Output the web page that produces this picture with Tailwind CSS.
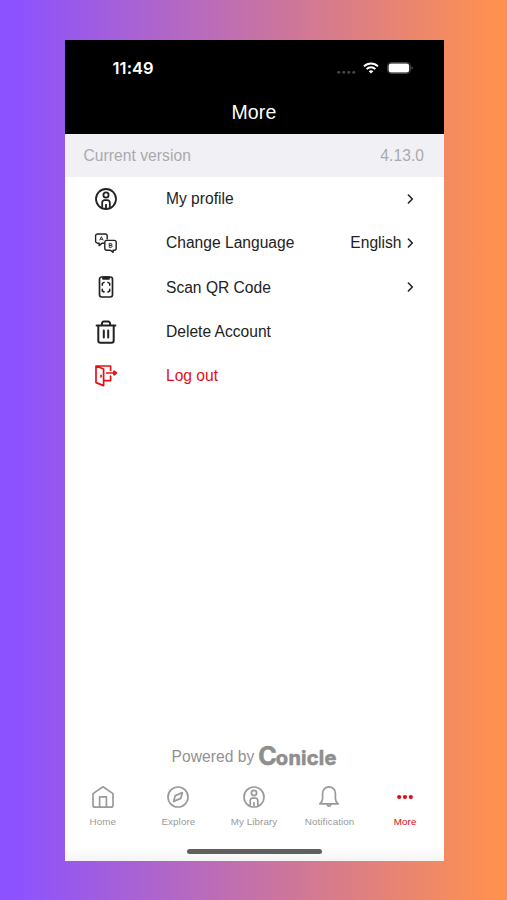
<!DOCTYPE html>
<html lang="en">
<head>
  <meta charset="UTF-8">
  <title>More</title>
  <script src="https://cdn.jsdelivr.net/npm/@tailwindcss/browser@4"></script>
</head>

<body>
  <div class="w-full h-screen pt-[39.5px] pl-[64.5px] bg-linear-to-r/srgb from-[#8c52ff] from-3% to-[#ff914f] to-98% font-['Liberation_Sans',sans-serif]">
    <div class="w-[379px] h-[821.5px] flex flex-col bg-white">
      <!-- header -->
      <header class="h-[94.5px] bg-black text-white">
        <div class="h-14 pl-12 pr-[31px] flex items-center justify-between">
          <span class="font-['Inter',sans-serif] font-semibold text-[16.5px] leading-4 tracking-[0.1px]">11:49</span>
          <div class="flex items-center">
            <svg class="w-5 h-4 mr-[6px]" viewBox="0 0 20 16" fill="#444">
              <circle cx="1.8" cy="12.2" r="1.5"/>
              <circle cx="6.8" cy="12.2" r="1.5"/>
              <circle cx="11.8" cy="12.2" r="1.5"/>
              <circle cx="16.8" cy="12.2" r="1.5"/>
            </svg>
            <svg class="w-4 h-3 mr-2" viewBox="0 0 16 12" fill="none" stroke="white" stroke-width="2">
              <path d="M1 4.4a10 10 0 0 1 14 0M3.6 7.1a6.3 6.3 0 0 1 8.8 0"/>
              <path d="M8 11.6 5.7 9.3a3.4 3.4 0 0 1 4.6 0z" fill="white" stroke="none"/>
            </svg>
            <svg class="w-[26px] h-3" viewBox="0 0 26 12">
              <rect x=".5" y=".5" width="23" height="11" rx="3.6" fill="none" stroke="#444"/>
              <rect x="1.6" y="1.6" width="20.6" height="8.8" rx="2.6" fill="white"/>
              <path d="M24.6 4.2v3.6a2 2 0 0 0 0-3.6z" fill="#666"/>
            </svg>
          </div>
        </div>
        <h1 class="text-center text-[19.5px] leading-8 tracking-[0.2px]">More</h1>
      </header>

      <div class="h-[42.5px] pt-px pl-[19px] pr-[19.5px] flex items-center justify-between bg-[#f1f0f5] text-[#aaaaac] text-[15.6px] tracking-[0.05px]">
        <span>Current version</span>
        <span>4.13.0</span>
      </div>

      <!-- menu -->
      <ul class="text-[15.6px] text-[#222]">
        <li class="h-[44.3px] pl-[29.5px] pr-[28px] flex items-center">
          <svg class="w-6 h-6 mr-12" viewBox="0 0 24 24" fill="none" stroke="currentColor" stroke-width="1.8">
            <circle cx="12" cy="12" r="10"/>
            <circle cx="12" cy="8" r="2.6"/>
            <path d="M8.2 20.8v-5.3a2.3 2.3 0 0 1 2.3-2.3h3a2.3 2.3 0 0 1 2.3 2.3v5.3M12 17v4"/>
          </svg>
          <span class="grow">My profile</span>
          <svg class="w-3 h-3" viewBox="0 0 12 12" fill="none" stroke="currentColor" stroke-width="1.6" stroke-linecap="round" stroke-linejoin="round"><path d="m4.4 2 3.9 4-3.9 4"/></svg>
        </li>
        <li class="h-[44.3px] pl-[29.5px] pr-[28px] flex items-center">
          <svg class="w-6 h-6 mr-12" viewBox="0 0 24 24" fill="none" stroke="currentColor" stroke-width="1.4" stroke-linejoin="round">
            <path d="M10.5 12.2H8L5.2 14.6v-2.4H3.6a2 2 0 0 1-2-2V5a2 2 0 0 1 2-2h7.6a2 2 0 0 1 2 2v3.5"/>
            <path d="M12.8 9.4h7.4a2 2 0 0 1 2 2v5.8a2 2 0 0 1-2 2h-1.1v2.2l-2.6-2.2h-3.7a2 2 0 0 1-2-2v-5.8a2 2 0 0 1 2-2z"/>
            <path d="m5.6 9.4 1.8-3.7 1.8 3.7M6.2 8.3h2.4M15.2 12.4h1.7a.9.9 0 0 1 0 1.9h-1.7zM15.2 14.3h2a1 1 0 0 1 0 2h-2z" stroke-width=".9"/>
          </svg>
          <span class="grow">Change Language</span>
          <span class="mr-[2px]">English</span>
          <svg class="w-3 h-3" viewBox="0 0 12 12" fill="none" stroke="currentColor" stroke-width="1.6" stroke-linecap="round" stroke-linejoin="round"><path d="m4.4 2 3.9 4-3.9 4"/></svg>
        </li>
        <li class="h-[44.3px] pl-[29.5px] pr-[28px] flex items-center">
          <svg class="w-6 h-6 mr-12" viewBox="0 0 24 24" fill="none" stroke="currentColor" stroke-width="1.7" stroke-linecap="round" stroke-linejoin="round">
            <rect x="5.5" y="2" width="13" height="20" rx="2.2"/>
            <path d="M9 2.2h6v1.6H9z"/>
            <path d="M8.3 10.2V8.4l1.8-1M15.7 10.2V8.4l-1.8-1M8.3 14.2V16l1.8 1M15.7 14.2V16l-1.8 1" stroke-width="1.5"/>
          </svg>
          <span class="grow">Scan QR Code</span>
          <svg class="w-3 h-3" viewBox="0 0 12 12" fill="none" stroke="currentColor" stroke-width="1.6" stroke-linecap="round" stroke-linejoin="round"><path d="m4.4 2 3.9 4-3.9 4"/></svg>
        </li>
        <li class="h-[44.3px] pl-[29.5px] pr-[28px] flex items-center">
          <svg class="w-6 h-6 mr-12" viewBox="0 0 24 24" fill="none" stroke="currentColor" stroke-width="2" stroke-linecap="round" stroke-linejoin="round">
            <path d="M2.6 5.4h18.8M4.3 5.6v15a2.2 2.2 0 0 0 2.2 2.2h11a2.2 2.2 0 0 0 2.2-2.2v-15M7.6 5.2l.6-2.6a1.5 1.5 0 0 1 1.4-1h4.8a1.5 1.5 0 0 1 1.4 1l.6 2.6M9.8 10.6v6.8M14.2 10.6v6.8"/>
          </svg>
          <span class="grow">Delete Account</span>
        </li>
        <li class="h-[44.3px] pl-[29.5px] pr-[28px] flex items-center text-[#e60f14]">
          <svg class="w-6 h-6 mr-12" viewBox="0 0 24 24" fill="none" stroke="currentColor" stroke-width="1.7" stroke-linecap="round" stroke-linejoin="round">
            <path d="M2 2 9.6 5v16.6L2 18.6zM2 2h14.6v4.2M16.6 12v4.6H9.8M12.8 9h8"/>
            <path d="M20 7.2 22.4 9 20 10.8z" fill="currentColor"/>
            <path d="M7 11.4v1.4"/>
          </svg>
          <span class="grow">Log out</span>
        </li>
      </ul>

      <div class="grow"></div>

      <div class="h-7 mb-[14px] pl-[107px] flex items-center text-[#919191]">
        <span class="text-[15.6px] tracking-[0.05px] mr-1">Powered by</span>
        <span class="flex items-baseline font-['Inter',sans-serif] font-bold leading-7 text-[#8e8e8e] [-webkit-text-stroke:0.6px_#8e8e8e]">
          <span class="text-[25px] -mr-px">C</span>
          <span class="text-[20px] tracking-[0.25px]">onicle</span>
        </span>
      </div>

      <!-- tab bar -->
      <nav class="px-[0.5px] grid grid-cols-5 text-center text-[9.8px] leading-3 tracking-[0.1px] text-[#9a9a9a]">
        <div class="flex flex-col items-center gap-[7px]">
          <svg class="w-6 h-6" viewBox="0 0 24 24" fill="none" stroke="currentColor" stroke-width="1.7" stroke-linejoin="round">
            <path d="M2 8.6 12 1.8l10 6.8v11.6a2 2 0 0 1-2 2H4a2 2 0 0 1-2-2z"/>
            <path d="M8.6 22V11.8h6.8V22"/>
          </svg>
          <span>Home</span>
        </div>
        <div class="flex flex-col items-center gap-[7px]">
          <svg class="w-6 h-6" viewBox="0 0 24 24" fill="none" stroke="currentColor" stroke-width="1.7" stroke-linejoin="round">
            <circle cx="12" cy="12" r="10"/>
            <path d="m16.4 7.6-1.6 5.8-7.2 3 1.7-5.8z"/>
          </svg>
          <span>Explore</span>
        </div>
        <div class="flex flex-col items-center gap-[7px]">
          <svg class="w-6 h-6" viewBox="0 0 24 24" fill="none" stroke="currentColor" stroke-width="1.7">
            <circle cx="12" cy="12" r="10"/>
            <circle cx="12" cy="8" r="2.6"/>
            <path d="M8.2 20.8v-5.3a2.3 2.3 0 0 1 2.3-2.3h3a2.3 2.3 0 0 1 2.3 2.3v5.3M12 17v4"/>
          </svg>
          <span>My Library</span>
        </div>
        <div class="flex flex-col items-center gap-[7px]">
          <svg class="w-6 h-6 -translate-x-px" viewBox="0 0 24 24" fill="none" stroke="currentColor" stroke-width="1.7" stroke-linecap="round" stroke-linejoin="round">
            <path d="M2.8 18.8c1.6-1.3 2.8-3 2.8-5.4V8.2a6.4 6.4 0 0 1 12.8 0v5.2c0 2.4 1.2 4.1 2.8 5.4zM10.2 19.8a1.9 1.9 0 0 0 3.6 0"/>
          </svg>
          <span>Notification</span>
        </div>
        <div class="flex flex-col items-center gap-[7px] text-[#e00b14]">
          <svg class="w-6 h-6" viewBox="0 0 24 24" fill="currentColor">
            <circle cx="6.2" cy="12" r="2.1"/>
            <circle cx="12" cy="12" r="2.1"/>
            <circle cx="17.8" cy="12" r="2.1"/>
          </svg>
          <span>More</span>
        </div>
      </nav>

      <div class="h-[33px] pt-[20.5px] shrink-0 bg-linear-to-b from-white from-60% to-[#f4f4f4]">
        <div class="w-[135px] h-[5px] mx-auto rounded-full bg-[#606060]"></div>
      </div>
    </div>
  </div>
</body>
</html>
